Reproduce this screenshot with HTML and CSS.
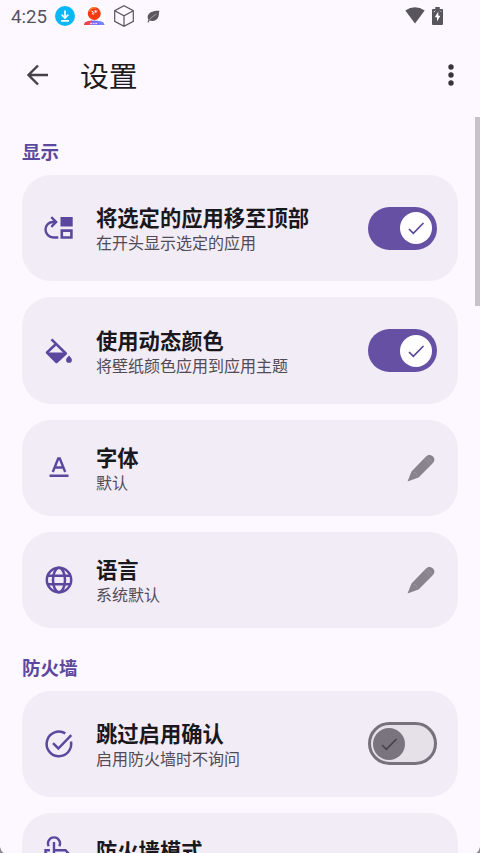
FILE: index.html
```
<!DOCTYPE html>
<html lang="zh-CN">
<head>
<meta charset="utf-8">
<title>设置</title>
<link rel="stylesheet" href="styles.css">
</head>
<body>
<div class="screen">
  <header class="status">
    <span class="clock">4:25</span>
    <svg class="s-download" width="20" height="20" viewBox="0 0 20 20"><circle cx="10" cy="10" r="10" fill="#08b8f5"/><path d="M10 4.500v7M6.700 8.700l3.300 3.300 3.300-3.300M6 14.800h8" fill="none" stroke="#fff" stroke-width="1.700"/></svg>
    <svg class="s-avatar" width="21" height="20" viewBox="0 0 21 20"><path d="M0 0h21v20H0z" fill="#fff"/><path d="M0 19l1-2.800q9-3.500 18 0l1.500 2.800z" fill="#7564ef"/><path d="M0 19l1-2.800q4-2 7-1.800l-2 4.600z" fill="#f2434e"/><path d="M13 14.700q3 .1 6 1.500l1.500 2.800h-5z" fill="#7187ff"/><path d="M6 17.500h8" stroke="#e6c8fb" stroke-width="1.500" stroke-dasharray="2 .6"/><circle cx="10.300" cy="7.500" r="6.500" fill="#f33a13"/><path d="M5 5.500a6 6 0 0 1 7-3.600" stroke="#ff812b" stroke-width="1.500" fill="none"/><path d="M7.500 5l2 1.200-1.400 1.500 2.200.4M11 4l1 3M10.400 6l3-1.200" stroke="#fff" stroke-width="1" fill="none"/></svg>
    <svg class="s-cube" width="20" height="22" viewBox="0 0 20 22"><path d="M10 .7l9.300 5v10.600L10 21.300.7 16.300V5.700zM.7 5.700l9.300 5 9.300-5M10 10.700v10.600" fill="none" stroke="#59555d" stroke-width="1.200"/></svg>
    <svg class="s-leaf" width="13" height="13" viewBox="0 0 13 13"><path d="M12.500.7C6 .3 1 2.500.7 6.500c-.1 1.500.2 2.300.7 3L.6 12.500l1.100.1.800-2c4 1.200 8.200-.4 9.100-4.300.4-2 .2-3.800.9-5.600z" fill="#5b575f"/><path d="M2 10.300Q4 6.800 9.500 4" fill="none" stroke="#c4bfca" stroke-width=".6"/></svg>
    <svg class="s-wifi" width="20" height="17" viewBox="0 0 20 17"><path d="M.3 3.600Q10-3.300 19.700 3.600L10 16.500z" fill="#59555d"/></svg>
    <svg class="s-battery" width="11" height="18" viewBox="0 0 11 18"><path d="M3.300 0h4.400v2H10q1 0 1 1v14q0 1-1 1H1q-1 0-1-1V3q0-1 1-1h2.300z" fill="#59555d"/><path d="M6.300 4.500L2.800 10.300h2.200v4.200l3.400-5.800H6.300z" fill="#fff"/><path d="M1.800 5.200l1.500-1.500M8 3.700l1.200 1.200" stroke="#d9d5dd" stroke-width="1"/></svg>
  </header>
  <nav class="appbar">
    <svg class="back" width="22" height="22" viewBox="0 0 22 22"><path d="M21 11H2M11 1.500L1.500 11l9.500 9.500" fill="none" stroke="#45414a" stroke-width="2.400"/></svg>
    <h1>设置</h1>
    <svg class="more" width="6" height="22" viewBox="0 0 6 22"><g fill="#38343d"><circle cx="3" cy="3" r="2.700"/><circle cx="3" cy="11" r="2.700"/><circle cx="3" cy="19" r="2.700"/></g></svg>
  </nav>
  <main>
    <h2>显示</h2>
    <section class="card tall">
      <svg class="icon" viewBox="0 0 32 32"><path d="M15.300 25.500H10.500A8 8 0 0 1 2.500 17.500C2.500 13 6 10 10 10H13M8.300 5.200l4.800 4.800-4.800 4.800" fill="none" stroke="#5c479f" stroke-width="2.400"/><path d="M17.500 5h12.200v9.600H17.500zM17.500 17.300h12.200v9.500H17.500zm2.600 2.600v4.300h7v-4.300z" fill="#5c479f" fill-rule="evenodd"/></svg>
      <div class="text"><h3>将选定的应用移至顶部</h3><p>在开头显示选定的应用</p></div>
      <div class="switch on"><svg class="thumb" viewBox="0 0 32 32"><path d="M9 17l4.300 4.300L23.500 11" fill="none" stroke="#57439a" stroke-width="1.600"/></svg></div>
    </section>
    <section class="card tall">
      <svg class="icon" viewBox="0 0 32 32"><path d="M8.500 4.300l14.300 14.200-9.300 8.500L4 17.500l9-8.500" fill="none" stroke="#5c479f" stroke-width="2.500" stroke-linejoin="round"/><path d="M4 17.500h18.500L13.500 27z" fill="#5c479f"/><path d="M26 20.500s-2.900 2.900-2.900 4.400a2.900 2.900 0 0 0 5.800 0c0-1.500-2.900-4.400-2.900-4.400z" fill="#5c479f"/></svg>
      <div class="text"><h3>使用动态颜色</h3><p>将壁纸颜色应用到应用主题</p></div>
      <div class="switch on"><svg class="thumb" viewBox="0 0 32 32"><path d="M9 17l4.300 4.300L23.500 11" fill="none" stroke="#57439a" stroke-width="1.600"/></svg></div>
    </section>
    <section class="card">
      <svg class="icon" viewBox="0 0 32 32"><path d="M6.500 23.800h19M9.800 20L15.200 6.500h1.600L22.200 20M11.800 15.500h8.400" fill="none" stroke="#5c479f" stroke-width="2.400"/></svg>
      <div class="text"><h3>字体</h3><p>默认</p></div>
      <svg class="pencil" viewBox="0 0 28 28"><path d="M.5 27.500L4.500 17.500 18.500 3c2.500-3 5.500-2.500 7.500-.5s2 4.500-.5 7l-14 14z" fill="#89838d"/><path d="M6.500 18q3 1 4 4M17.500 5.500q4 2 5.500 5.500M20 3.500q4 2 5.500 5.500" fill="none" stroke="#a29ca6" stroke-width=".7"/></svg>
    </section>
    <section class="card">
      <svg class="icon" viewBox="0 0 32 32"><g fill="none" stroke="#5c479f" stroke-width="2.500"><circle cx="16" cy="16" r="12.200"/><ellipse cx="16" cy="16" rx="6" ry="12.200"/><path d="M4.500 11.800h23M4.500 20.200h23"/></g></svg>
      <div class="text"><h3>语言</h3><p>系统默认</p></div>
      <svg class="pencil" viewBox="0 0 28 28"><path d="M.5 27.500L4.500 17.500 18.500 3c2.500-3 5.500-2.500 7.500-.5s2 4.500-.5 7l-14 14z" fill="#89838d"/><path d="M6.500 18q3 1 4 4M17.500 5.500q4 2 5.500 5.500M20 3.500q4 2 5.500 5.500" fill="none" stroke="#a29ca6" stroke-width=".7"/></svg>
    </section>
    <h2 class="second">防火墙</h2>
    <section class="card tall">
      <svg class="icon" viewBox="0 0 32 32"><path d="M22.300 5.400A12.300 12.300 0 1 0 28 13.600M10 15.200l5.300 5.300L28.300 7.200" fill="none" stroke="#5c479f" stroke-width="2.500"/></svg>
      <div class="text"><h3>跳过启用确认</h3><p>启用防火墙时不询问</p></div>
      <div class="switch off"><svg class="thumb" viewBox="0 0 32 32"><path d="M9 17l4.300 4.300L23.500 11" fill="none" stroke="#47414b" stroke-width="1.600"/></svg></div>
    </section>
    <section class="card last">
      <svg class="icon" viewBox="0 0 32 32"><path d="M5.700 12.200A6 6 0 1 1 16.300 12.200M11 23V8M11 16.300h11.500L26 20v9H13L2.500 18.500V16.300H7" fill="none" stroke="#5c479f" stroke-width="2.400"/></svg>
      <div class="text"><h3>防火墙模式</h3></div>
    </section>
  </main>
  <div class="scrollbar"></div>
  <svg class="corner left" width="5" height="6" viewBox="0 0 6 7"><path d="M0 0Q1 5 4.500 7H0z" fill="#8d8990"/></svg>
  <svg class="corner right" width="5" height="6" viewBox="0 0 6 7"><path d="M6 0Q5 5 1.500 7H6z" fill="#8d8990"/></svg>
</div>
</body>
</html>
```
FILE: styles.css
```
* { box-sizing: border-box; }
body { margin: 0; background: #fdf7ff; font-family: "Noto Sans CJK SC", sans-serif; }
.screen { position: relative; width: 480px; height: 853px; overflow: hidden; }
h1, h2, h3, p { margin: 0; }
svg { display: block; flex: none; }
.status { display: flex; height: 32px; align-items: center; padding: 0 37px 0 11px; }
.clock { width: 44px; padding-top: 1px; font: 400 18.700px/32px Roboto, sans-serif; color: #57535b; }
.s-avatar { margin-left: 8.500px; }
.s-cube { margin-left: 9px; margin-top: -1px; }
.s-leaf { margin-left: 13px; margin-top: 1px; }
.s-wifi { margin-left: auto; margin-top: -1px; }
.s-battery { margin-left: 7.500px; margin-top: -1px; }
.appbar { display: flex; align-items: center; height: 85px; padding: 0 26.500px; }
.appbar h1 { margin: 1px 0 0 31.500px; font-size: 28.800px; line-height: 42px; font-weight: 400; color: #1d1b20; }
.more { margin-left: auto; }
main { padding: 21px 22px 0; }
h2 { height: 37px; font-size: 18.500px; line-height: 26px; font-weight: 700; color: #5c479f; }
.second { margin-top: 26px; }
.card { display: flex; align-items: center; height: 95.700px; margin-bottom: 16.300px; padding: 0 21px 0 20.500px; border-radius: 29px; background: #f2ecf7; }
.tall { height: 106.200px; }
.last { align-items: flex-start; padding-top: 20.500px; }
.icon { width: 32px; height: 32px; }
.text { flex: 1; margin: 0 0 0 21.500px; }
.last .text { margin-top: 2px; }
h3 { font-size: 21.300px; line-height: 28px; font-weight: 700; color: #1a181d; white-space: nowrap; }
p { font-size: 16px; line-height: 22px; color: #504b55; white-space: nowrap; }
.switch { display: flex; align-items: center; width: 69.500px; height: 43px; border-radius: 22px; }
.thumb { width: 32px; height: 32px; border-radius: 50%; }
.on { justify-content: flex-end; padding-right: 5px; background: #6650a4; }
.on .thumb { background: #fff; }
.off { padding-left: 2px; border: 3px solid #77717b; background: #e6e0e9; }
.off .thumb { background: #7a747e; }
.pencil { width: 28px; height: 28px; margin-right: 2px; }
.scrollbar { position: absolute; top: 117px; right: 0; width: 5px; height: 189px; background: #c7c1c9; }
.corner { position: absolute; bottom: 0; }
.left { left: 0; }
.right { right: 0; }
```
